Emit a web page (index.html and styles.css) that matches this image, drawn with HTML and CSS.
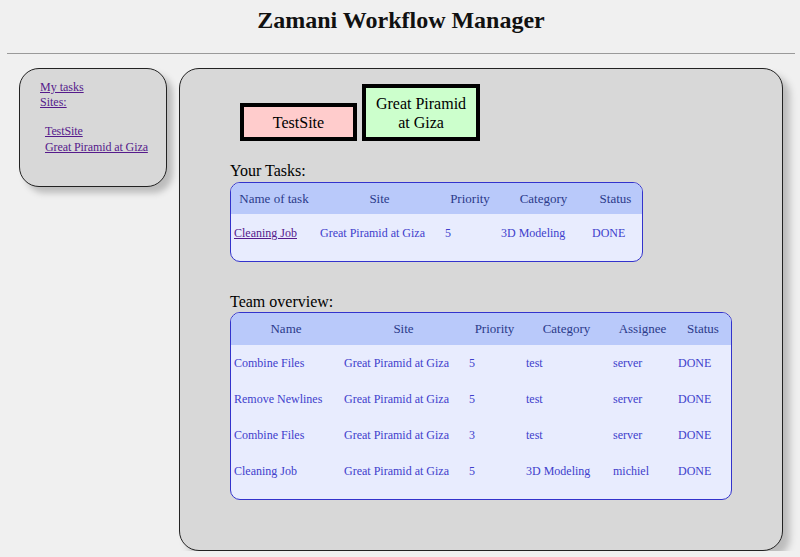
FILE: index.html
```html
<!DOCTYPE html>
<html>
<head>
<meta charset="utf-8">
<link rel="stylesheet" href="styles.css">
</head>
<body>
<header class="top">
  <h1 class="title">Zamani Workflow Manager</h1>
</header>
<div class="layout">
  <nav class="side">
    <a href="#" class="lnk">My tasks</a>
    <a href="#" class="lnk">Sites:</a>
    <ul class="sites">
      <li><a href="#" class="lnk">TestSite</a></li>
      <li><a href="#" class="lnk">Great Piramid at Giza</a></li>
    </ul>
  </nav>
  <main class="main">
    <div class="sitebar">
      <div class="site pink">TestSite</div>
      <div class="site green">Great Piramid at Giza</div>
    </div>
    <div class="label">Your Tasks:</div>
    <div class="tbox t1">
      <table>
        <thead>
          <tr><th>Name of task</th><th>Site</th><th>Priority</th><th>Category</th><th>Status</th></tr>
        </thead>
        <tbody>
          <tr><td><a href="#" class="lnk">Cleaning Job</a></td><td>Great Piramid at Giza</td><td>5</td><td>3D Modeling</td><td>DONE</td></tr>
        </tbody>
      </table>
    </div>
    <div class="label gap">Team overview:</div>
    <div class="tbox t2">
      <table>
        <thead>
          <tr><th>Name</th><th>Site</th><th>Priority</th><th>Category</th><th>Assignee</th><th>Status</th></tr>
        </thead>
        <tbody>
          <tr><td>Combine Files</td><td>Great Piramid at Giza</td><td>5</td><td>test</td><td>server</td><td>DONE</td></tr>
          <tr><td>Remove Newlines</td><td>Great Piramid at Giza</td><td>5</td><td>test</td><td>server</td><td>DONE</td></tr>
          <tr><td>Combine Files</td><td>Great Piramid at Giza</td><td>3</td><td>test</td><td>server</td><td>DONE</td></tr>
          <tr><td>Cleaning Job</td><td>Great Piramid at Giza</td><td>5</td><td>3D Modeling</td><td>michiel</td><td>DONE</td></tr>
        </tbody>
      </table>
    </div>
  </main>
</div>
</body>
</html>
```
FILE: styles.css
```css
html, body {
  margin: 0;
  padding: 0;
  background: #f0f0f0;
  font-family: "Liberation Serif", "Times New Roman", serif;
  color: #000;
}
body {
  padding: 0 5px 0 7px;
}
.top {
  border-bottom: 1px solid #9a9a9a;
  height: 54px;
  box-sizing: border-box;
}
.title {
  margin: 0;
  padding-top: 6px;
  text-align: center;
  font-size: 24px;
  font-weight: bold;
  line-height: 28px;
  color: #111;
}
.layout {
  display: flex;
  align-items: flex-start;
  gap: 12px;
  padding: 14px 0 0 12px;
}
.lnk {
  color: #551a8b;
  text-decoration: underline;
}
.side {
  width: 148px;
  height: 119px;
  box-sizing: border-box;
  background: #d8d8d8;
  border: 1px solid #222;
  border-radius: 20px;
  box-shadow: 6px 6px 6px #bcbcbc;
  padding: 11px 0 0 20px;
  font-size: 12px;
  line-height: 15px;
  display: flex;
  flex-direction: column;
  align-items: flex-start;
}
.sites {
  list-style: none;
  margin: 13px 0 0 5px;
  padding: 0;
}
.sites li {
  line-height: 16px;
  letter-spacing: -0.1px;
}
.main {
  width: 604px;
  height: 483px;
  box-sizing: border-box;
  background: #d8d8d8;
  border: 1px solid #222;
  border-radius: 20px;
  box-shadow: 7px 7px 7px #bcbcbc;
  padding: 15px 0 0 50px;
}
.sitebar {
  display: flex;
  align-items: flex-end;
  gap: 5px;
  padding-left: 10px;
}
.site {
  box-sizing: border-box;
  border: 4px solid #000;
  padding: 6px 4px 5px;
  text-align: center;
  font-size: 16px;
  line-height: 19px;
}
.site.pink { background: #ffcccc; width: 117px; }
.site.green { background: #ccffcc; width: 118px; }
.label {
  font-size: 16px;
  line-height: 18px;
  margin-top: 21px;
  margin-bottom: 2px;
}
.label.gap { margin-top: 31px; margin-bottom: 1px; }
.tbox {
  border: 1px solid #3333cc;
  border-radius: 10px;
  background: #e8ecfe;
  overflow: hidden;
  padding-bottom: 10px;
}
.t1 { width: 413px; box-sizing: border-box; padding-bottom: 11px; }
.t2 { width: 502px; box-sizing: border-box; }
table {
  border-collapse: collapse;
  table-layout: fixed;
  width: 100%;
}
thead tr { background: #b9c9fa; }
th {
  height: 31px;
  padding: 0;
  box-sizing: border-box;
  font-weight: normal;
  font-size: 13px;
  color: #2b3a8a;
  text-align: center;
}
.t2 th { height: 32px; }
td {
  height: 36px;
  padding: 2px 0 0 3px;
  box-sizing: border-box;
  font-size: 12px;
  color: #4040cc;
  text-align: left;
  white-space: nowrap;
}
.t2 td { padding-top: 1px; }
.t1 th:nth-child(1) { width: 86px; }
.t1 th:nth-child(2) { width: 125px; }
.t1 th:nth-child(3) { width: 56px; }
.t1 th:nth-child(4) { width: 91px; }
.t2 th:nth-child(1) { width: 110px; }
.t2 th:nth-child(2) { width: 125px; }
.t2 th:nth-child(3) { width: 57px; }
.t2 th:nth-child(4) { width: 87px; }
.t2 th:nth-child(5) { width: 65px; }
```
